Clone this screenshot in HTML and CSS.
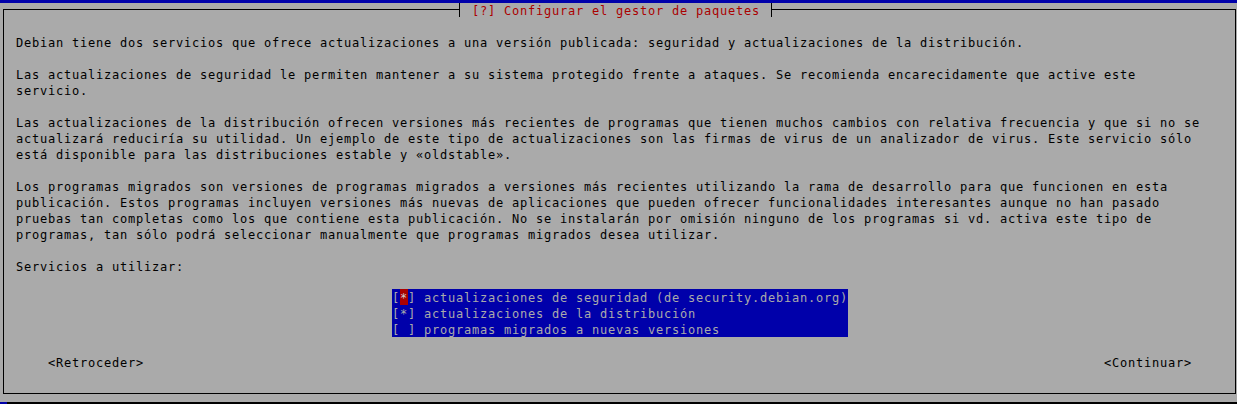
FILE: index.html
```html
<!DOCTYPE html>
<html lang="es">
<head>
<meta charset="utf-8">
<title>Configurar el gestor de paquetes</title>
<link rel="stylesheet" href="styles.css">
</head>
<body>
<div class="screen">
  <div class="topbar"></div>
  <div class="window">
    <div class="frame">
      <div class="title"><span class="title-text">[?] Configurar el gestor de paquetes</span></div>
      <div class="ln"></div>
      <div class="ln">Debian tiene dos servicios que ofrece actualizaciones a una versión publicada: seguridad y actualizaciones de la distribución.</div>
      <div class="ln"></div>
      <div class="ln">Las actualizaciones de seguridad le permiten mantener a su sistema protegido frente a ataques. Se recomienda encarecidamente que active este</div>
      <div class="ln">servicio.</div>
      <div class="ln"></div>
      <div class="ln">Las actualizaciones de la distribución ofrecen versiones más recientes de programas que tienen muchos cambios con relativa frecuencia y que si no se</div>
      <div class="ln">actualizará reduciría su utilidad. Un ejemplo de este tipo de actualizaciones son las firmas de virus de un analizador de virus. Este servicio sólo</div>
      <div class="ln">está disponible para las distribuciones estable y «oldstable».</div>
      <div class="ln"></div>
      <div class="ln">Los programas migrados son versiones de programas migrados a versiones más recientes utilizando la rama de desarrollo para que funcionen en esta</div>
      <div class="ln">publicación. Estos programas incluyen versiones más nuevas de aplicaciones que pueden ofrecer funcionalidades interesantes aunque no han pasado</div>
      <div class="ln">pruebas tan completas como los que contiene esta publicación. No se instalarán por omisión ninguno de los programas si vd. activa este tipo de</div>
      <div class="ln">programas, tan sólo podrá seleccionar manualmente que programas migrados desea utilizar.</div>
      <div class="ln"></div>
      <div class="ln">Servicios a utilizar:</div>
      <div class="ln"></div>
      <div class="list">
        <div class="item"><span>[</span><span class="cursor">*</span><span>] actualizaciones de seguridad (de security.debian.org)</span></div>
        <div class="item"><span>[*] actualizaciones de la distribución</span></div>
        <div class="item"><span>[ ] programas migrados a nuevas versiones</span></div>
      </div>
      <div class="ln"></div>
      <div class="ln buttons"><span class="btn">&lt;Retroceder&gt;</span><span class="btn">&lt;Continuar&gt;</span></div>
      <div class="ln"></div>
    </div>
  </div>
  <div class="bottom"><div class="bottom-blue"></div></div>
</div>
</body>
</html>
```
FILE: styles.css
```css
html, body {
  margin: 0;
  padding: 0;
  background: #000000;
}

.screen {
  width: 1237px;
  height: 404px;
  overflow: hidden;
  font-family: "DejaVu Sans Mono", "Liberation Mono", monospace;
  font-size: 12px;
  letter-spacing: 0.7754px;
  color: #000000;
}

.topbar {
  height: 3px;
  background: #0000aa;
}

.window {
  height: 399px;
  background: #aaaaaa;
  display: flex;
  flex-direction: column;
}

.frame {
  margin: 6px 1px 8px 3px;
  border: 1px solid #000000;
  padding: 0 0 7px 12px;
  flex: 1;
}

.title {
  display: flex;
  width: fit-content;
  margin: -7px 0 1px 443px;
  height: 14px;
  padding: 0 11px 0 12px;
  background: #aaaaaa;
  border-left: 1px solid #000000;
  border-right: 1px solid #000000;
}

.title-text {
  color: #aa0000;
  line-height: 16px;
  white-space: pre;
}

.ln {
  height: 16px;
  line-height: 18px;
  white-space: pre;
}

.list {
  margin-left: 376px;
  width: 456px;
  margin-top: -1px;
  margin-bottom: 1px;
  background: #0000aa;
  color: #aaaaaa;
}

.item {
  display: flex;
  height: 16px;
  line-height: 18px;
  white-space: pre;
}

.item span {
  white-space: pre;
}

.cursor {
  background: #aa0000;
  color: #cccccc;
}

.buttons {
  display: flex;
  justify-content: space-between;
  padding: 0 43px 0 32px;
}

.btn {
  white-space: pre;
}

.bottom {
  height: 2px;
  display: flex;
  background: #000000;
}

.bottom-blue {
  width: 7px;
  background: #0000aa;
}
```
